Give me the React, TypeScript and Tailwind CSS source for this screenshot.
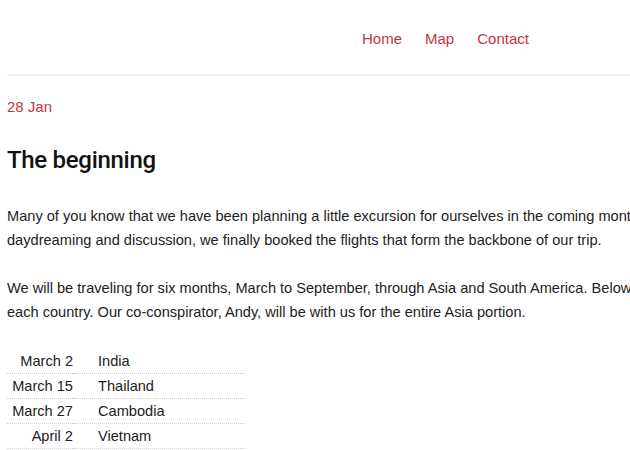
import React from 'react';

const trips = [
  { date: 'March 2', place: 'India' },
  { date: 'March 15', place: 'Thailand' },
  { date: 'March 27', place: 'Cambodia' },
  { date: 'April 2', place: 'Vietnam' },
];

const App = () => {
  return (
    <div className="w-[630px] h-[450px] overflow-hidden bg-white font-['Liberation_Sans',Arial,sans-serif] text-[#222]">
      <div className="w-[900px] pl-[7px]">
        {/* Header */}
        <header className="h-[76px] border-b-2 border-[#f0f0f0] flex items-start">
          <nav className="ml-[355px] mt-[28px] flex gap-[23px] text-[15px] text-[#c4343f]">
            <a href="#">Home</a>
            <a href="#">Map</a>
            <a href="#">Contact</a>
          </nav>
        </header>

        {/* Post */}
        <article>
          <div className="mt-[21px] text-[15px] leading-[20px] text-[#c4343f]">28 Jan</div>
          <h1 className="mt-[28px] text-[24px] leading-[30px] font-['Roboto',Arial,sans-serif] font-medium tracking-[-0.3px] text-[#111]">
            The beginning
          </h1>
          <div className="mt-[29px] text-[14.6px] leading-[24px] space-y-6">
            <p>
              Many of you know that we have been planning a little excursion for ourselves in the coming months. After many months of
              <br />
              daydreaming and discussion, we finally booked the flights that form the backbone of our trip.
            </p>
            <p>
              We will be traveling for six months, March to September, through Asia and South America. Below are the dates we arrive in
              <br />
              each country. Our co-conspirator, Andy, will be with us for the entire Asia portion.
            </p>
          </div>

          <table className="mt-[25px] w-[238px] text-[14.6px] border-collapse">
            <tbody>
              {trips.map((t) => (
                <tr key={t.date} className="border-b border-dotted border-[#ccc]">
                  <td className="w-[66px] text-right h-[24px] leading-[24px]">{t.date}</td>
                  <td className="pl-[25px] leading-[24px]">{t.place}</td>
                </tr>
              ))}
            </tbody>
          </table>
        </article>
      </div>
    </div>
  );
};

export default App;
